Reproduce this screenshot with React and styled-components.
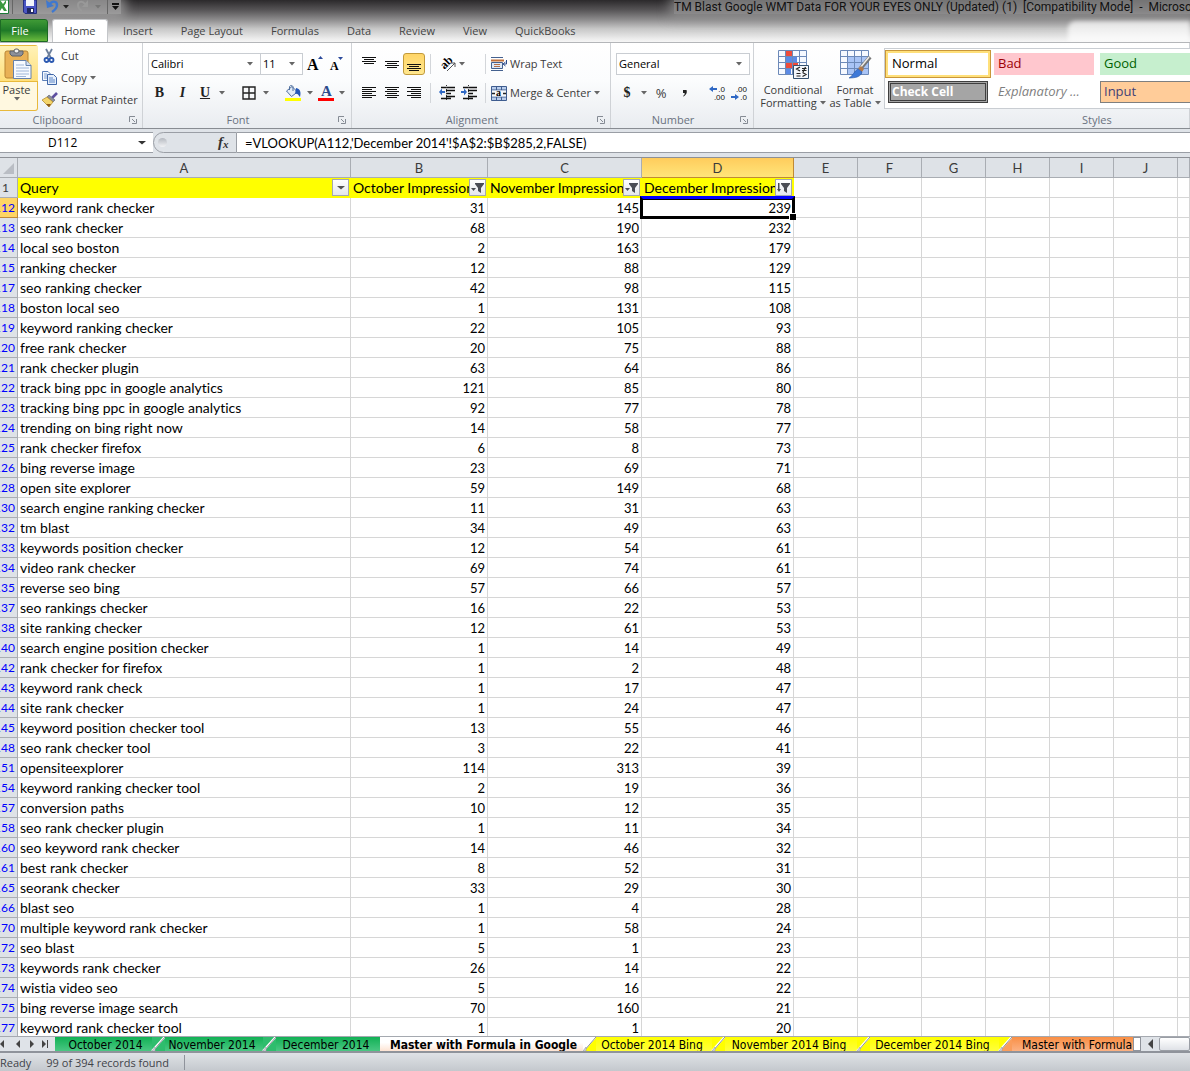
import { useState } from "react";
import styled, { createGlobalStyle } from "styled-components";

const COLUMNS = ["A", "B", "C", "D", "E", "F", "G", "H", "I", "J", "K"];
const EMPTY_COLUMNS = ["E", "F", "G", "H", "I", "J", "K"];
const RIBBON_TABS = ["Insert", "Page Layout", "Formulas", "Data", "Review", "View", "QuickBooks"];

const ROWS = [
    [112, "keyword rank checker", 31, 145, 239],
    [113, "seo rank checker", 68, 190, 232],
    [114, "local seo boston", 2, 163, 179],
    [115, "ranking checker", 12, 88, 129],
    [117, "seo ranking checker", 42, 98, 115],
    [118, "boston local seo", 1, 131, 108],
    [119, "keyword ranking checker", 22, 105, 93],
    [120, "free rank checker", 20, 75, 88],
    [121, "rank checker plugin", 63, 64, 86],
    [122, "track bing ppc in google analytics", 121, 85, 80],
    [123, "tracking bing ppc in google analytics", 92, 77, 78],
    [124, "trending on bing right now", 14, 58, 77],
    [125, "rank checker firefox", 6, 8, 73],
    [126, "bing reverse image", 23, 69, 71],
    [128, "open site explorer", 59, 149, 68],
    [130, "search engine ranking checker", 11, 31, 63],
    [132, "tm blast", 34, 49, 63],
    [133, "keywords position checker", 12, 54, 61],
    [134, "video rank checker", 69, 74, 61],
    [135, "reverse seo bing", 57, 66, 57],
    [137, "seo rankings checker", 16, 22, 53],
    [138, "site ranking checker", 12, 61, 53],
    [140, "search engine position checker", 1, 14, 49],
    [142, "rank checker for firefox", 1, 2, 48],
    [143, "keyword rank check", 1, 17, 47],
    [144, "site rank checker", 1, 24, 47],
    [145, "keyword position checker tool", 13, 55, 46],
    [148, "seo rank checker tool", 3, 22, 41],
    [151, "opensiteexplorer", 114, 313, 39],
    [154, "keyword ranking checker tool", 2, 19, 36],
    [157, "conversion paths", 10, 12, 35],
    [158, "seo rank checker plugin", 1, 11, 34],
    [160, "seo keyword rank checker", 14, 46, 32],
    [161, "best rank checker", 8, 52, 31],
    [165, "seorank checker", 33, 29, 30],
    [166, "blast seo", 1, 4, 28],
    [170, "multiple keyword rank checker", 1, 58, 24],
    [172, "seo blast", 5, 1, 23],
    [173, "keywords rank checker", 26, 14, 22],
    [174, "wistia video seo", 5, 16, 22],
    [175, "bing reverse image search", 70, 160, 21],
    [177, "keyword rank checker tool", 1, 1, 20],
];

export default function App() {
    const [formula, setFormula] = useState("=VLOOKUP(A112,'December 2014'!$A$2:$B$285,2,FALSE)");

    return (
        <>
            <GlobalStyle />
            <Window>
                <TopChrome>
                    <TitleBar>
                        <QuickAccess>
                            <ExcelLogo />
                            <QuickDivider />
                            <QuickButton $w={28} aria-label="Save"><SaveIcon /></QuickButton>
                            <QuickButton $w={16} aria-label="Undo"><UndoIcon color="#3f78cf" /></QuickButton>
                            <QuickButton $w={12} aria-label="Undo list"><Caret color="#222" /></QuickButton>
                            <QuickButton $w={20} aria-label="Redo"><RedoIcon /></QuickButton>
                            <QuickButton $w={12} aria-label="Redo list"><Caret color="#777" /></QuickButton>
                            <QuickDivider />
                            <QuickButton $w={10} aria-label="Customize toolbar"><CustomizeIcon /></QuickButton>
                        </QuickAccess>
                        <Title>TM Blast Google WMT Data FOR YOUR EYES ONLY (Updated) (1)&nbsp; [Compatibility Mode]&nbsp; -&nbsp; Microsoft Excel</Title>
                    </TitleBar>
                    <TabStrip>
                        <FileTab>File</FileTab>
                        <HomeTab>Home</HomeTab>
                        {RIBBON_TABS.map((t) => <RibbonTab key={t}>{t}</RibbonTab>)}
                        <Reflection />
                    </TabStrip>
                </TopChrome>

                <Ribbon>
                    <ClipboardGroup />
                    <FontGroup />
                    <AlignmentGroup />
                    <NumberGroup />
                    <StylesGroup />
                </Ribbon>

                <FormulaBar>
                    <NameBox>
                        <NameInput aria-label="Name box" defaultValue="D112" />
                        <Caret big color="#333" />
                    </NameBox>
                    <FunctionArea>
                        <Knob />
                        <FxButton aria-label="Insert function"><FxIcon /></FxButton>
                    </FunctionArea>
                    <FormulaInput aria-label="Formula" value={formula} onChange={(e) => setFormula(e.target.value)} />
                </FormulaBar>

                <Sheet />
                <SheetTabs />

                <StatusBar>
                    <span>Ready</span>
                    <Records>99 of 394 records found</Records>
                </StatusBar>
            </Window>
        </>
    );
}

function ClipboardGroup() {
    return (
        <Group $w={143}>
            <ClipboardBody>
                <PasteButton>
                    <PasteTop><PasteIcon /></PasteTop>
                    <span>Paste</span>
                    <Caret />
                </PasteButton>
                <ClipboardList>
                    <TextButton><CutIcon /><span>Cut</span></TextButton>
                    <TextButton><CopyIcon /><span>Copy</span><Caret /></TextButton>
                    <TextButton><BrushIcon /><span>Format Painter</span></TextButton>
                </ClipboardList>
            </ClipboardBody>
            <GroupLabel><LabelText $pad={9}>Clipboard</LabelText><Launcher /></GroupLabel>
        </Group>
    );
}

function FontGroup() {
    return (
        <Group $w={209}>
            <GroupBody>
                <ToolRow>
                    <Dropdown $w={113}>
                        <select aria-label="Font"><option>Calibri</option></select>
                        <Caret />
                    </Dropdown>
                    <Dropdown $w={43}>
                        <select aria-label="Font size"><option>11</option></select>
                        <Caret />
                    </Dropdown>
                    <Spacer $w={2} />
                    <ToolButton $w={24} aria-label="Grow font"><GrowFontIcon /></ToolButton>
                    <ToolButton $w={20} aria-label="Shrink font"><ShrinkFontIcon /></ToolButton>
                </ToolRow>
                <ToolRow>
                    <Letter $w={23} $bold>B</Letter>
                    <Letter $w={23} $italic>I</Letter>
                    <Letter $w={22} $underline>U</Letter>
                    <ToolButton $w={11} aria-label="Underline list"><Caret /></ToolButton>
                    <ToolDivider />
                    <ToolButton $w={24} aria-label="Borders"><BordersIcon /></ToolButton>
                    <ToolButton $w={10} aria-label="Borders list"><Caret /></ToolButton>
                    <ToolDivider />
                    <ToolButton $w={24} aria-label="Fill color"><BucketIcon /></ToolButton>
                    <ToolButton $w={10} aria-label="Fill color list"><Caret /></ToolButton>
                    <ToolButton $w={22} aria-label="Font color"><FontColorIcon /></ToolButton>
                    <ToolButton $w={10} aria-label="Font color list"><Caret /></ToolButton>
                </ToolRow>
            </GroupBody>
            <GroupLabel><LabelText>Font</LabelText><Launcher /></GroupLabel>
        </Group>
    );
}

function AlignmentGroup() {
    return (
        <Group $w={259}>
            <GroupBody>
                <ToolRow>
                    <ToolButton $w={23} aria-label="Top align"><LinesIcon step={2} top={1} rows={[[0, 14], [2, 10], [0, 14], [2, 10]]} /></ToolButton>
                    <ToolButton $w={23} aria-label="Middle align"><LinesIcon step={2} top={5} rows={[[0, 14], [2, 10], [0, 14], [2, 10]]} /></ToolButton>
                    <ToolButton $w={22} $active aria-label="Bottom align"><LinesIcon step={2} top={8} rows={[[0, 14], [2, 10], [0, 14], [2, 10]]} /></ToolButton>
                    <ToolDivider />
                    <ToolButton $w={34} aria-label="Orientation"><OrientationIcon /><Caret /></ToolButton>
                    <Spacer $w={10} />
                    <ToolDivider />
                    <TextButton><WrapIcon /><span>Wrap Text</span></TextButton>
                </ToolRow>
                <ToolRow>
                    <ToolButton $w={23} aria-label="Align left"><LinesIcon step={2} top={2} rows={[[0, 14], [0, 10], [0, 14], [0, 10], [0, 14], [0, 10]]} /></ToolButton>
                    <ToolButton $w={23} aria-label="Align center"><LinesIcon step={2} top={2} rows={[[0, 14], [2, 10], [0, 14], [2, 10], [0, 14], [2, 10]]} /></ToolButton>
                    <ToolButton $w={22} aria-label="Align right"><LinesIcon step={2} top={2} rows={[[0, 14], [4, 10], [0, 14], [4, 10], [0, 14], [4, 10]]} /></ToolButton>
                    <ToolDivider />
                    <ToolButton $w={22} aria-label="Decrease indent"><IndentIcon /></ToolButton>
                    <ToolButton $w={22} aria-label="Increase indent"><IndentIcon right /></ToolButton>
                    <ToolDivider />
                    <TextButton><MergeIcon /><span>Merge &amp; Center</span><Caret /></TextButton>
                </ToolRow>
            </GroupBody>
            <GroupLabel><LabelText>Alignment</LabelText><Launcher /></GroupLabel>
        </Group>
    );
}

function NumberGroup() {
    return (
        <Group $w={143}>
            <GroupBody>
                <ToolRow>
                    <Dropdown $w={134}>
                        <select aria-label="Number format"><option>General</option></select>
                        <Caret />
                    </Dropdown>
                </ToolRow>
                <ToolRow>
                    <Letter $w={22} $bold>$</Letter>
                    <ToolButton $w={11} aria-label="Currency list"><Caret /></ToolButton>
                    <Percent $w={24}>%</Percent>
                    <ToolButton $w={24} aria-label="Comma style"><CommaIcon /></ToolButton>
                    <ToolDivider />
                    <ToolButton $w={20} aria-label="Increase decimal"><DecimalIcon /></ToolButton>
                    <ToolButton $w={24} aria-label="Decrease decimal"><DecimalIcon decrease /></ToolButton>
                </ToolRow>
            </GroupBody>
            <GroupLabel><LabelText>Number</LabelText><Launcher /></GroupLabel>
        </Group>
    );
}

function StylesGroup() {
    return (
        <Group $grow>
            <StylesBody>
                <BigButton $w={66}>
                    <ConditionalIcon />
                    <span>Conditional</span>
                    <span>Formatting <Caret /></span>
                </BigButton>
                <BigButton $w={58}>
                    <FormatTableIcon />
                    <span>Format</span>
                    <span>as Table <Caret /></span>
                </BigButton>
                <Gallery>
                    <StyleCell $bg="#fff" $color="#000" $picked>Normal</StyleCell>
                    <StyleCell $bg="#ffc7ce" $color="#9c0006">Bad</StyleCell>
                    <StyleCell $bg="#c6efce" $color="#006100">Good</StyleCell>
                    <CheckCell $bg="#a5a5a5" $color="#fff">Check Cell</CheckCell>
                    <StyleCell $bg="#fff" $color="#7f7f7f" $italic>Explanatory ...</StyleCell>
                    <InputCell $bg="#ffcc99" $color="#3f3f76">Input</InputCell>
                </Gallery>
            </StylesBody>
            <StylesLabel>Styles</StylesLabel>
        </Group>
    );
}

function Sheet() {
    return (
        <SheetArea>
            <Table>
                <colgroup>
                    <Col $w={18} />
                    <Col $w={333} />
                    <Col $w={137} />
                    <Col $w={154} />
                    <Col $w={152} />
                    {EMPTY_COLUMNS.slice(1).map((c) => <Col key={c} $w={64} />)}
                    <col />
                </colgroup>
                <thead>
                    <tr>
                        <Corner><CornerIcon /></Corner>
                        {COLUMNS.map((c) => <ColHead key={c} scope="col" $active={c === "D"}>{c === "K" ? "" : c}</ColHead>)}
                    </tr>
                </thead>
                <tbody>
                    <tr>
                        <RowHead scope="row" $plain><span>1</span></RowHead>
                        <FilterHead label="Query" />
                        <FilterHead label="October Impressions" kind="funnel" />
                        <FilterHead label="November Impressions" kind="funnel" />
                        <FilterHead label="December Impressions" kind="sorted" />
                        {EMPTY_COLUMNS.map((c) => <Cell key={c} />)}
                    </tr>
                    {ROWS.map(([n, query, oct, nov, dec]) => (
                        <tr key={n}>
                            <RowHead scope="row" $active={n === 112}><span>{n}</span></RowHead>
                            <Cell>{query}</Cell>
                            <NumberCell>{oct}</NumberCell>
                            <NumberCell>{nov}</NumberCell>
                            <NumberCell>{dec}{n === 112 && <Selection />}</NumberCell>
                            {EMPTY_COLUMNS.map((c) => <Cell key={c} />)}
                        </tr>
                    ))}
                </tbody>
            </Table>
        </SheetArea>
    );
}

function FilterHead({ label, kind }) {
    return (
        <YellowCell>
            <FilterRow>
                <span>{label}</span>
                <FilterButton aria-label={`Filter ${label}`}><FilterIcon kind={kind} /></FilterButton>
            </FilterRow>
        </YellowCell>
    );
}

function SheetTabs() {
    return (
        <TabBar>
            <TabNav>
                <NavButton aria-label="Previous sheet"><NavIcon d="M4 1 L0 5 L4 9Z" /></NavButton>
                <NavButton aria-label="Back"><NavIcon d="M6 1 L2 5 L6 9Z" /></NavButton>
                <NavButton aria-label="Next sheet"><NavIcon d="M2 1 L6 5 L2 9Z" /></NavButton>
                <NavButton aria-label="Last sheet"><NavIcon d="M0 1 L4 5 L0 9Z M5 1H6V9H5Z" /></NavButton>
            </TabNav>
            <SheetTab $w={97} $pad={4} $color="green">October 2014</SheetTab>
            <Slant left="#2ebd6d" right="#2ebd6d" />
            <SheetTab $w={98} $color="green">November 2014</SheetTab>
            <Slant left="#2ebd6d" right="#2ebd6d" />
            <SheetTab $w={104} $color="green">December 2014</SheetTab>
            <SheetTab $w={203} $pad={4} $color="active">Master with Formula in Google</SheetTab>
            <Slant left="#fff" right="#ffff00" />
            <SheetTab $w={116} $color="yellow">October 2014 Bing</SheetTab>
            <Slant left="#ffff00" right="#ffff00" />
            <SheetTab $w={132} $color="yellow">November 2014 Bing</SheetTab>
            <Slant left="#ffff00" right="#ffff00" />
            <SheetTab $w={129} $color="yellow">December 2014 Bing</SheetTab>
            <Slant left="#ffff00" right="#fa9d5c" />
            <SheetTab $w={121} $pad={10} $color="orange" $clip>Master with Formula</SheetTab>
            <Splitter />
            <NavButton $wide aria-label="Scroll left"><NavIcon d="M6 0 L1 5 L6 10Z" /></NavButton>
            <ScrollThumb />
        </TabBar>
    );
}

/* icons */

function Caret({ color = "#666", big }) {
    return (
        <svg width={big ? 8 : 6} height="4" viewBox="0 0 6 4" preserveAspectRatio="none">
            <path d="M0 0H6L3 3.5Z" fill={color} />
        </svg>
    );
}

function ExcelLogo() {
    return (
        <svg width="9" height="14" viewBox="0 0 9 14">
            <path d="M0 0H8.500V13.500H0" fill="#fff" stroke="#1d7a38" />
            <path d="M0 0L3 4L6 0V3L4 6L7 11H4L2 8L0 11Z" fill="#3a9a3f" />
        </svg>
    );
}

function SaveIcon() {
    return (
        <svg width="14" height="14" viewBox="0 0 14 14">
            <path d="M.5 0H13.500V13.500H2L.5 12Z" fill="#4a55c4" stroke="#26307f" />
            <path d="M3 0H11V6H3Z" fill="#f3f5fb" />
            <path d="M4 8H11V13H4Z" fill="#20285f" />
            <path d="M8 9H10V12H8Z" fill="#fff" />
        </svg>
    );
}

function UndoIcon({ color }) {
    return (
        <svg width="13" height="14" viewBox="0 0 13 14">
            <path d="M3 5C6 0 11 1 11 5C11 8 9 10 6 12" fill="none" stroke={color} strokeWidth="2.400" />
            <path d="M0 0L1 8L8 6Z" fill={color} />
        </svg>
    );
}

function RedoIcon() {
    return (
        <svg width="13" height="14" viewBox="0 0 13 14">
            <path d="M9 4C6 0 2 2 2 5C2 8 4 10 6 11" fill="none" stroke="#999" strokeWidth="2" />
            <path d="M12 0V7H6Z" fill="#999" />
        </svg>
    );
}

function CustomizeIcon() {
    return (
        <svg width="8" height="8" viewBox="0 0 8 8">
            <path d="M0 0H7V2H0ZM0 3H7L3.500 7Z" fill="#111" />
        </svg>
    );
}

function PasteIcon() {
    return (
        <svg width="28" height="32" viewBox="0 0 28 32">
            <rect x="1" y="3" width="23" height="27" rx="2" fill="#e9b155" stroke="#b98534" />
            <path d="M6 3H19V6L17 8H8L6 6Z" fill="#8d9099" stroke="#5c6069" />
            <rect x="10" y="1" width="5" height="4" rx="2" fill="#f2f2f2" stroke="#5c6069" />
            <path d="M9.500 12.500H22L27 17.500V30.500H9.500Z" fill="#f7faff" stroke="#6581ab" />
            <path d="M22 12.500V17.500H27" fill="#d5e1f2" stroke="#6581ab" />
            <path d="M12 17H20M12 20H25M12 23H25M12 26H25M12 28.500H22" stroke="#9fb6d8" />
        </svg>
    );
}

function CutIcon() {
    return (
        <svg width="16" height="14" viewBox="0 0 16 14">
            <path d="M4 0L9 9M10 0L5 9" stroke="#6c7f9c" strokeWidth="1.800" />
            <circle cx="4.500" cy="11" r="2" fill="none" stroke="#2a58b0" strokeWidth="1.800" />
            <circle cx="9.500" cy="11" r="2" fill="none" stroke="#2a58b0" strokeWidth="1.800" />
        </svg>
    );
}

function CopyIcon() {
    return (
        <svg width="16" height="14" viewBox="0 0 16 14">
            <path d="M.5 .5H6L9 3.500V9.500H.5Z" fill="#f3f7fd" stroke="#5b7fb8" />
            <path d="M2 3H5M2 5H7M2 7H7" stroke="#7fa0d2" />
            <path d="M5.500 3.500H11.500L14.500 6.500V13.500H5.500Z" fill="#e6effb" stroke="#3f66a8" />
            <path d="M7 7H11M7 9H13M7 11H13" stroke="#5c86c8" />
        </svg>
    );
}

function BrushIcon() {
    return (
        <svg width="16" height="14" viewBox="0 0 16 14">
            <path d="M15 0L10 5" stroke="#5d4fa0" strokeWidth="2.600" />
            <path d="M7 2L13 7L11 9L5 4Z" fill="#8b8f9c" stroke="#5a5e6b" strokeWidth=".6" />
            <path d="M5 4L11 9L7 14L0 7Z" fill="#f4d469" stroke="#a98323" strokeWidth=".7" />
            <path d="M7 14L9 11L4 11Z" fill="#8c5a1c" />
        </svg>
    );
}

function GrowFontIcon() {
    return (
        <svg width="16" height="16" viewBox="0 0 16 16">
            <SvgLetter x="0" y="14" fontSize="16">A</SvgLetter>
            <path d="M11 3L13.500 0L16 3Z" fill="#2b4a9b" />
        </svg>
    );
}

function ShrinkFontIcon() {
    return (
        <svg width="14" height="16" viewBox="0 0 14 16">
            <SvgLetter x="0" y="14" fontSize="12">A</SvgLetter>
            <path d="M8 1L10.500 4L13 1Z" fill="#2b4a9b" />
        </svg>
    );
}

function BordersIcon() {
    return (
        <svg width="14" height="14" viewBox="0 0 14 14">
            <path d="M1 1H13V13H1ZM7 1V13M1 7H13" fill="none" stroke="#222" strokeWidth="1.400" />
        </svg>
    );
}

function BucketIcon() {
    return (
        <svg width="16" height="17" viewBox="0 0 16 17">
            <path d="M1.500 6L7 1.500L12.500 7L6.500 11.500Z" fill="#e2ebf8" stroke="#50709f" />
            <path d="M4.500 5V2C4.500 0 8 0 8 2V6" fill="none" stroke="#50709f" />
            <path d="M11 3C16 4 16 8 15 12C13 9 12 8 10 9Z" fill="#2457b8" />
            <path d="M0 13H16V16H0Z" fill="#ff0" />
        </svg>
    );
}

function FontColorIcon() {
    return (
        <svg width="16" height="17" viewBox="0 0 16 17">
            <SvgLetter x="3" y="11" fontSize="15" fill="#2c4b8c">A</SvgLetter>
            <path d="M0 13H16V16H0Z" fill="#f00" />
        </svg>
    );
}

function LinesIcon({ top, step, rows }) {
    return (
        <svg width="14" height="16" viewBox="0 0 14 16" shapeRendering="crispEdges">
            {rows.map(([x, w], i) => <rect key={i} x={x} y={top + i * step} width={w} height="1" fill="#111" />)}
        </svg>
    );
}

function OrientationIcon() {
    return (
        <svg width="16" height="16" viewBox="0 0 16 16">
            <SvgLetter x="0" y="11" fontSize="12" transform="rotate(-45 5 8)">ab</SvgLetter>
            <path d="M6 15L14 7M14 7H10M14 7V11" fill="none" stroke="#555" />
        </svg>
    );
}

function WrapIcon() {
    return (
        <svg width="16" height="16" viewBox="0 0 16 16">
            <path d="M0 1.500H12M0 14.500H12" stroke="#44618f" />
            <path d="M0 4.500H13" stroke="#c0703a" strokeWidth="2" />
            <path d="M.5 6.500H11.500V12.500H.5Z" fill="#dfe9f7" stroke="#44618f" />
            <path d="M3 8.500H9M3 10.500H9" stroke="#b3714a" />
            <path d="M15.500 4V8H13M14.500 6L12 8L14.500 10" fill="none" stroke="#2b4a8b" />
        </svg>
    );
}

function IndentIcon({ right }) {
    return (
        <svg width="16" height="16" viewBox="0 0 16 16">
            <path d="M2 2.500H16M7 5.500H16M7 8.500H12M7 11.500H16M2 13.500H12" stroke="#111" strokeWidth="1.400" />
            <path d="M7.500 0V16" stroke="#333" strokeDasharray="1 1" />
            <path d={right ? "M0 6H3V3.500L6 7L3 10.500V8H0Z" : "M6 6H3V3.500L0 7L3 10.500V8H6Z"} fill="#2f68c4" />
        </svg>
    );
}

function MergeIcon() {
    return (
        <svg width="16" height="15" viewBox="0 0 16 15">
            <path d="M.5 .5H15.500V14.500H.5Z" fill="#b9cdec" stroke="#3e5c8f" />
            <path d="M.5 4H15.500M.5 11H15.500M5.500 1V4M10.500 1V4M5.500 11V14M10.500 11V14" stroke="#3e5c8f" />
            <path d="M1 4.500H15V10.500H1Z" fill="#f5f8fd" />
            <SvgLetter x="5" y="10" fontSize="10">a</SvgLetter>
            <path d="M1 7.500H4M15 7.500H12" stroke="#222" strokeWidth="1.500" />
        </svg>
    );
}

function CommaIcon() {
    return (
        <svg width="6" height="8" viewBox="0 0 6 8">
            <path d="M1 1H4.500C5.500 4 4 6 1.500 7.500L1 7C2.500 6 3 5 2.500 4H1Z" fill="#222" />
        </svg>
    );
}

function DecimalIcon({ decrease }) {
    return (
        <svg width="16" height="16" viewBox="0 0 16 16">
            <SvgDigits x="16" y="7">{decrease ? ".00" : ".0"}</SvgDigits>
            <SvgDigits x="16" y="15">{decrease ? ".0" : ".00"}</SvgDigits>
            <path d={decrease ? "M0 11H4V9L8 12L4 15V13H0Z" : "M8 3H4V1L0 4L4 7V5H8Z"} fill="#2f68c4" />
        </svg>
    );
}

function ConditionalIcon() {
    return (
        <svg width="31" height="29" viewBox="0 0 31 29">
            <path d="M.5 .5H28.500V24.500H.5Z" fill="#f6f9ff" />
            <path d="M7 0H14V6.500H7ZM7 13H20V19H7Z" fill="#ee4b3b" />
            <path d="M7 7H19V13H7ZM7 19H13V25H7Z" fill="#5b8ae6" />
            <path d="M.5 .5H28.500V24.500H.5ZM.5 6.500H28M.5 12.500H28M.5 18.500H28M7.500 1V24M14.500 1V24M21.500 1V24" fill="none" stroke="#6c89b8" />
            <path d="M15.500 15.500H30.500V28.500H15.500Z" fill="#f4f7fc" stroke="#34506f" />
            <path d="M22 17L18.500 19L22 21M18.500 23.500H22.500M18.500 26H22.500M24 18.500H28.500M24 20.500H28.500M27.500 17L25 22M24.500 22.500L28 24.500L24.500 26.500" fill="none" stroke="#222" strokeWidth="1.200" />
        </svg>
    );
}

function FormatTableIcon() {
    return (
        <svg width="31" height="29" viewBox="0 0 31 29">
            <path d="M.5 .5H28.500V24.500H.5Z" fill="#f6f9ff" />
            <path d="M7 6H28V24H7Z" fill="#a9c4f5" />
            <path d="M.5 .5H28.500V24.500H.5ZM.5 6.500H28M.5 12.500H28M.5 18.500H28M7.500 1V24M14.500 1V24M21.500 1V24" fill="none" stroke="#6c89b8" />
            <path d="M30 7L20 19" stroke="#777" strokeWidth="4" />
            <path d="M29 7L20 18" stroke="#f0ede8" strokeWidth="1.500" />
            <path d="M21 16L24 19L22 22L18 19Z" fill="#b27a4b" />
            <path d="M18 19L22 22C21 27 15 28 9 28C13 26 14 21 18 19Z" fill="#3c78d8" stroke="#2a57a5" strokeWidth=".6" />
        </svg>
    );
}

function FxIcon() {
    return (
        <svg width="16" height="16" viewBox="0 0 16 16">
            <SvgLetter x="2" y="12" fontSize="15" fontStyle="italic" fill="#333">f</SvgLetter>
            <SvgLetter x="7" y="13" fontSize="11" fontStyle="italic" fill="#333">x</SvgLetter>
        </svg>
    );
}

function CornerIcon() {
    return (
        <svg width="11" height="11" viewBox="0 0 11 11">
            <path d="M11 0V11H0Z" fill="#b9bdc4" />
        </svg>
    );
}

function FilterIcon({ kind }) {
    if (!kind) return <Caret big color="#555" />;
    return (
        <svg width="13" height="10" viewBox="0 0 13 10">
            <path d="M4 0H13V1L10 5V10L7 8V5L4 1Z" fill="#4a4d55" />
            {kind === "funnel" ? <path d="M0 5H5L2.500 8Z" fill="#4a4d55" /> : <path d="M1 0H2.500V6H4L2 9L0 6H1Z" fill="#4a4d55" />}
        </svg>
    );
}

function NavIcon({ d }) {
    return (
        <svg width="7" height="10" viewBox="0 0 7 10">
            <path d={d} fill="#444" />
        </svg>
    );
}

function Slant({ left, right }) {
    return (
        <svg width="13" height="14" viewBox="0 0 13 14">
            <path d="M0 0H13L0 14Z" fill={left} />
            <path d="M13 0V14H3L2 12Z" fill={right} />
            <path d="M12.500 0L0 14" stroke="#fff" strokeWidth="2" />
            <path d="M13 0L1 14" stroke="#8b8f96" />
            <path d="M0 14L3 10V14Z" fill="#d9dce1" stroke="#9a9ea6" strokeWidth=".6" />
        </svg>
    );
}

/* styles */

const GlobalStyle = createGlobalStyle`
* { box-sizing: border-box; }
body {
    margin: 0;
    overflow: hidden;
    font-family: "Open Sans", sans-serif;
    font-size: 11px;
    color: #3b3b3b;
}
button, input, select {
    font: inherit;
    color: inherit;
    margin: 0;
    padding: 0;
    border: 0;
    background: none;
    white-space: nowrap;
}
svg {
    flex: none;
    display: block;
    overflow: visible;
}
`

const Window = styled.div`
display: flex;
flex-direction: column;
height: 100vh;
background: #fff;
`

const TopChrome = styled.header`
background: linear-gradient(#2b292b, #575557 24%, #8b8a8b 46%, #c6c6c6 68%, #ececec 92%, #f6f6f6);
border-bottom: 1px solid #b4b6b9;
overflow: hidden;
`

const TitleBar = styled.div`
display: flex;
justify-content: space-between;
height: 19px;
`

const QuickAccess = styled.div`
display: flex;
align-items: flex-start;
height: 14px;
background: rgba(175, 175, 175, 0.7);
box-shadow: 0 0 12px 4px rgba(175, 175, 175, 0.7);
`

const QuickButton = styled.button`
display: flex;
justify-content: center;
align-items: center;
width: ${(p) => p.$w}px;
height: 14px;
`

const QuickDivider = styled.div`
width: 1px;
height: 14px;
margin: 0 3px;
background: #666;
`

const Title = styled.div`
width: 516px;
height: 14px;
overflow: hidden;
white-space: nowrap;
font-family: Roboto, sans-serif;
font-size: 12px;
line-height: 14px;
color: #111;
background: rgba(155, 155, 155, 0.65);
box-shadow: 0 0 12px 4px rgba(155, 155, 155, 0.65);
`

const TabStrip = styled.nav`
display: flex;
align-items: stretch;
height: 23px;
`

const RibbonTab = styled.button`
position: relative;
padding: 0 14px;
color: #444;
`

const FileTab = styled(RibbonTab)`
width: 48px;
padding: 0 8px 0 0;
color: #fff;
border: 1px solid #1d6a24;
border-radius: 0 3px 0 0;
background: linear-gradient(#3f9a36, #1f7a28 50%, #6abb3d);
`

const HomeTab = styled(RibbonTab)`
width: 56px;
height: 24px;
padding: 0 0 2px;
margin: 0 1px 0 4px;
background: #fff;
border: 1px solid #c4c6c9;
border-bottom: 0;
border-radius: 3px 3px 0 0;
`

const Reflection = styled.div`
width: 122px;
margin: 2px 0 0 auto;
border-radius: 8px 0 0 0;
background: rgba(255, 255, 255, 0.7);
filter: blur(2px);
`

const Ribbon = styled.section`
display: flex;
height: 86px;
border-bottom: 1px solid #888c92;
background: linear-gradient(#fff, #fbfcfd 45%, #e9ecf0);
overflow: hidden;
`

const Group = styled.div`
display: flex;
flex-direction: column;
justify-content: space-between;
flex: ${(p) => (p.$grow ? "1 0 0" : "none")};
width: ${(p) => (p.$w ? `${p.$w}px` : "auto")};
min-width: 0;
border-right: 1px solid #cfd2d6;
`

const GroupBody = styled.div`
display: flex;
flex-direction: column;
gap: 7px;
padding: 10px 4px 0 5px;
`

const GroupLabel = styled.div`
display: grid;
grid-template-columns: 1fr 18px;
align-items: center;
height: 17px;
color: #6a7280;
text-align: center;
`

const LabelText = styled.span`
padding-right: ${(p) => p.$pad || 0}px;
`

const StylesLabel = styled.div`
height: 17px;
line-height: 17px;
padding-left: 328px;
color: #6a7280;
`

const LauncherButton = styled.button`
display: flex;
justify-content: center;
`

function Launcher() {
    return (
        <LauncherButton aria-label="More options">
            <svg width="8" height="8" viewBox="0 0 8 8">
                <path d="M.5 6V.5H6M3 3L6 6M7.500 3V7.500H3" fill="none" stroke="#858b94" />
            </svg>
        </LauncherButton>
    );
}

const ClipboardBody = styled.div`
display: flex;
gap: 4px;
padding-top: 2px;
`

const PasteButton = styled.button`
display: flex;
flex-direction: column;
align-items: center;
width: 38px;
height: 66px;
border: 1px solid #e8b93c;
border-left: 0;
border-radius: 0 3px 3px 0;
padding-right: 4px;
line-height: 15px;
background: #fff8e0;
`

const PasteTop = styled.span`
display: flex;
justify-content: center;
width: 38px;
height: 36px;
padding: 2px 2px 0 0;
margin-right: -4px;
border-bottom: 1px solid #e8b93c;
background: linear-gradient(#fff2b8, #ffdf7c);
`

const ClipboardList = styled.div`
display: flex;
flex-direction: column;
`

const TextButton = styled.button`
display: flex;
align-items: center;
gap: 3px;
height: 22px;
span { padding-bottom: 2px; }
`

const ToolRow = styled.div`
display: flex;
align-items: center;
height: 22px;
`

const ToolButton = styled.button`
display: flex;
align-items: center;
justify-content: center;
flex: none;
gap: 2px;
width: ${(p) => p.$w}px;
height: 22px;
border-radius: 3px;
border: ${(p) => (p.$active ? "1px solid #c29a3a" : "0")};
background: ${(p) => (p.$active ? "linear-gradient(#ffd567, #ffe78e)" : "none")};
`

const Letter = styled(ToolButton)`
font-family: "Liberation Serif", serif;
font-size: 14px;
font-weight: 700;
font-style: ${(p) => (p.$italic ? "italic" : "normal")};
text-decoration: ${(p) => (p.$underline ? "underline" : "none")};
color: #222;
`

const Percent = styled(ToolButton)`
font-size: 13px;
`

const ToolDivider = styled.div`
width: 1px;
height: 20px;
margin: 0 5px;
background: #d3d6da;
`

const Spacer = styled.div`
width: ${(p) => p.$w}px;
`

const Dropdown = styled.label`
display: grid;
grid-template-columns: 1fr 13px;
align-items: center;
flex: none;
width: ${(p) => p.$w}px;
height: 22px;
border: 1px solid #c9cdd2;
background: #fff;
margin-right: -1px;
select {
    grid-area: 1 / 1 / 2 / 3;
    width: 100%;
    height: 20px;
    padding: 0 0 2px 2px;
    appearance: none;
    color: #000;
}
svg {
    grid-area: 1 / 2;
    pointer-events: none;
}
`

const SvgLetter = styled.text`
font-family: "Liberation Serif", serif;
font-weight: 700;
`

const SvgDigits = styled.text`
font-family: "Liberation Sans", sans-serif;
font-size: 8px;
text-anchor: end;
fill: #111;
`

const StylesBody = styled.div`
display: flex;
padding: 5px 0 0 6px;
`

const BigButton = styled.button`
display: flex;
flex-direction: column;
align-items: center;
flex: none;
width: ${(p) => p.$w}px;
padding-top: 2px;
line-height: 13px;
span {
    display: flex;
    align-items: center;
    gap: 3px;
}
svg + span { margin-top: 4px; }
`

const Gallery = styled.div`
display: grid;
flex: none;
grid-template-columns: repeat(3, 100px);
grid-auto-rows: 22px;
gap: 6px;
height: 61px;
padding: 4px 3px;
border: 1px solid #c9cdd2;
background: #fff;
`

const StyleCell = styled.button`
padding: 0 0 2px 4px;
text-align: left;
font-size: 13px;
line-height: 18px;
background: ${(p) => p.$bg};
color: ${(p) => p.$color};
font-style: ${(p) => (p.$italic ? "italic" : "normal")};
box-shadow: ${(p) => (p.$picked ? "0 0 0 2px #ffe07a, 0 0 0 3px #c9973a" : "none")};
`

const CheckCell = styled(StyleCell)`
padding: 0 0 0 1px;
font-size: 12px;
font-weight: 700;
border: 3px double #3f3f3f;
line-height: 14px;
`

const InputCell = styled(StyleCell)`
padding-left: 3px;
border: 1px solid #7f7f7f;
`

const FormulaBar = styled.div`
display: flex;
height: 29px;
padding: 3px 0 4px;
background: #dfe3e8;
border-bottom: 1px solid #8d9096;
`

const NameBox = styled.label`
display: flex;
align-items: center;
flex: none;
width: 153px;
border: solid #9a9ea5;
border-width: 1px 0;
background: #fff;
`

const NameInput = styled.input`
width: 138px;
padding-left: 48px;
font-size: 12px;
color: #000;
`

const FunctionArea = styled.div`
display: flex;
align-items: center;
justify-content: space-between;
flex: none;
width: 84px;
padding: 0 4px;
border: 1px solid #9a9ea5;
border-radius: 11px 0 0 11px;
background: #dfe3e8;
`

const Knob = styled.span`
width: 9px;
height: 9px;
border-radius: 50%;
background: linear-gradient(#b5b9c0, #f2f3f5);
`

const FxButton = styled.button`
display: flex;
`

const FormulaInput = styled.input`
flex: 1;
min-width: 0;
padding-left: 8px;
font-family: Lato, sans-serif;
font-size: 13px;
color: #000;
border: solid #9a9ea5;
border-width: 1px 0;
background: #fff;
`

const SheetArea = styled.main`
flex: 1;
min-height: 0;
overflow: hidden;
`

const Table = styled.table`
width: 100%;
table-layout: fixed;
border-collapse: separate;
border-spacing: 0;
font-family: Lato, sans-serif;
font-size: 14px;
font-variant-ligatures: none;
line-height: 19px;
color: #000;
td, th {
    height: 20px;
    padding: 0 2px;
    font-weight: 400;
    white-space: nowrap;
}
`

const Col = styled.col`
width: ${(p) => p.$w}px;
`

const ColHead = styled.th`
text-align: center;
font-size: 13px;
color: #3b3b3b;
border-right: 1px solid ${(p) => (p.$active ? "#c08a35" : "#a9adb3")};
border-bottom: 1px solid ${(p) => (p.$active ? "#c08a35" : "#a9adb3")};
background: ${(p) => (p.$active ? "linear-gradient(#ffcc5c, #ffe57a)" : "#dee2e7")};
&&& {
    padding-top: 2px;
    line-height: 17px;
}
`

const Corner = styled(ColHead).attrs({ as: "td" })`
svg { margin-left: 1px; }
`

const RowHead = styled.th`
overflow: hidden;
font-size: 12px;
color: ${(p) => (p.$plain ? "#3b3b3b" : "#0000ff")};
border-right: 1px solid ${(p) => (p.$active ? "#c08a35" : "#a9adb3")};
border-bottom: 1px solid ${(p) => (p.$active ? "#c08a35" : "#a9adb3")};
background: ${(p) => (p.$active ? "#ffd564" : "#dee2e7")};
span {
    display: flex;
    justify-content: ${(p) => (p.$plain ? "flex-start" : "flex-end")};
    width: 100%;
}
`

const Cell = styled.td`
border-right: 1px solid #d6d6d6;
border-bottom: 1px solid #d6d6d6;
`

const NumberCell = styled(Cell)`
position: relative;
text-align: right;
font-size: 13px;
&&& {
    padding-top: 2px;
    line-height: 17px;
}
`

const YellowCell = styled(Cell)`
background: #ffff00;
border-color: #ffff00;
`

const FilterRow = styled.div`
display: flex;
align-items: center;
height: 19px;
margin-right: -1px;
span {
    flex: 1;
    min-width: 0;
    overflow: hidden;
}
`

const FilterButton = styled.button`
display: flex;
align-items: center;
justify-content: center;
flex: none;
width: 17px;
height: 17px;
border: 1px solid #a4a8b0;
background: linear-gradient(#fff, #e4e7ec);
`

const Selection = styled.div`
position: absolute;
inset: -2px -2px -2px -2px;
z-index: 1;
border: 3px solid #000;
border-top-color: #0000ff;
box-shadow: inset 0 1px 0 #000;
pointer-events: none;
&::after {
    content: "";
    position: absolute;
    right: -4px;
    bottom: -4px;
    width: 6px;
    height: 6px;
    background: #000;
    border: solid #fff;
    border-width: 1px 0 0 1px;
}
`

const TabBar = styled.nav`
display: flex;
flex: none;
height: 17px;
border-top: 1px solid #a5a9b0;
border-bottom: 2px solid #8f939b;
background: #dfe3e8;
overflow: hidden;
`

const TabNav = styled.div`
display: flex;
justify-content: space-between;
flex: none;
width: 55px;
padding-right: 6px;
`

const NavButton = styled.button`
display: flex;
align-items: center;
justify-content: center;
width: ${(p) => (p.$wide ? 18 : 7)}px;
`

const TAB_FILLS = {
    green: "linear-gradient(#12b155, #4ac783)",
    yellow: "linear-gradient(#ffff00, #ffff3c)",
    orange: "linear-gradient(#f98f45, #fbb183)",
    active: "linear-gradient(#fff 40%, #fde3d2)",
};

const SheetTab = styled.button`
flex: ${(p) => (p.$clip ? "0 1 auto" : "none")};
width: ${(p) => p.$w}px;
padding: 1px ${(p) => (p.$pad ? 0 : 4)}px 0 ${(p) => p.$pad || 0}px;
text-align: ${(p) => (p.$clip ? "left" : "center")};
overflow: hidden;
font-family: "DejaVu Sans Condensed", "Open Sans", sans-serif;
font-size: 12px;
line-height: 14px;
font-weight: ${(p) => (p.$color === "active" ? 700 : 400)};
color: #000;
background: ${(p) => TAB_FILLS[p.$color]};
`

const Splitter = styled.div`
flex: none;
width: 8px;
border: 1px solid #8f939b;
background: #fff;
`

const ScrollThumb = styled.div`
flex: 1;
border: 1px solid #9a9ea5;
border-radius: 2px;
background: linear-gradient(#fff, #dfe2e7);
`

const StatusBar = styled.footer`
display: flex;
align-items: center;
flex: none;
height: 18px;
color: #3f4349;
background: linear-gradient(#dfe2e6, #c4c8cd);
`

const Records = styled.span`
padding: 0 15px;
border-right: 1px solid #8f939b;
`
